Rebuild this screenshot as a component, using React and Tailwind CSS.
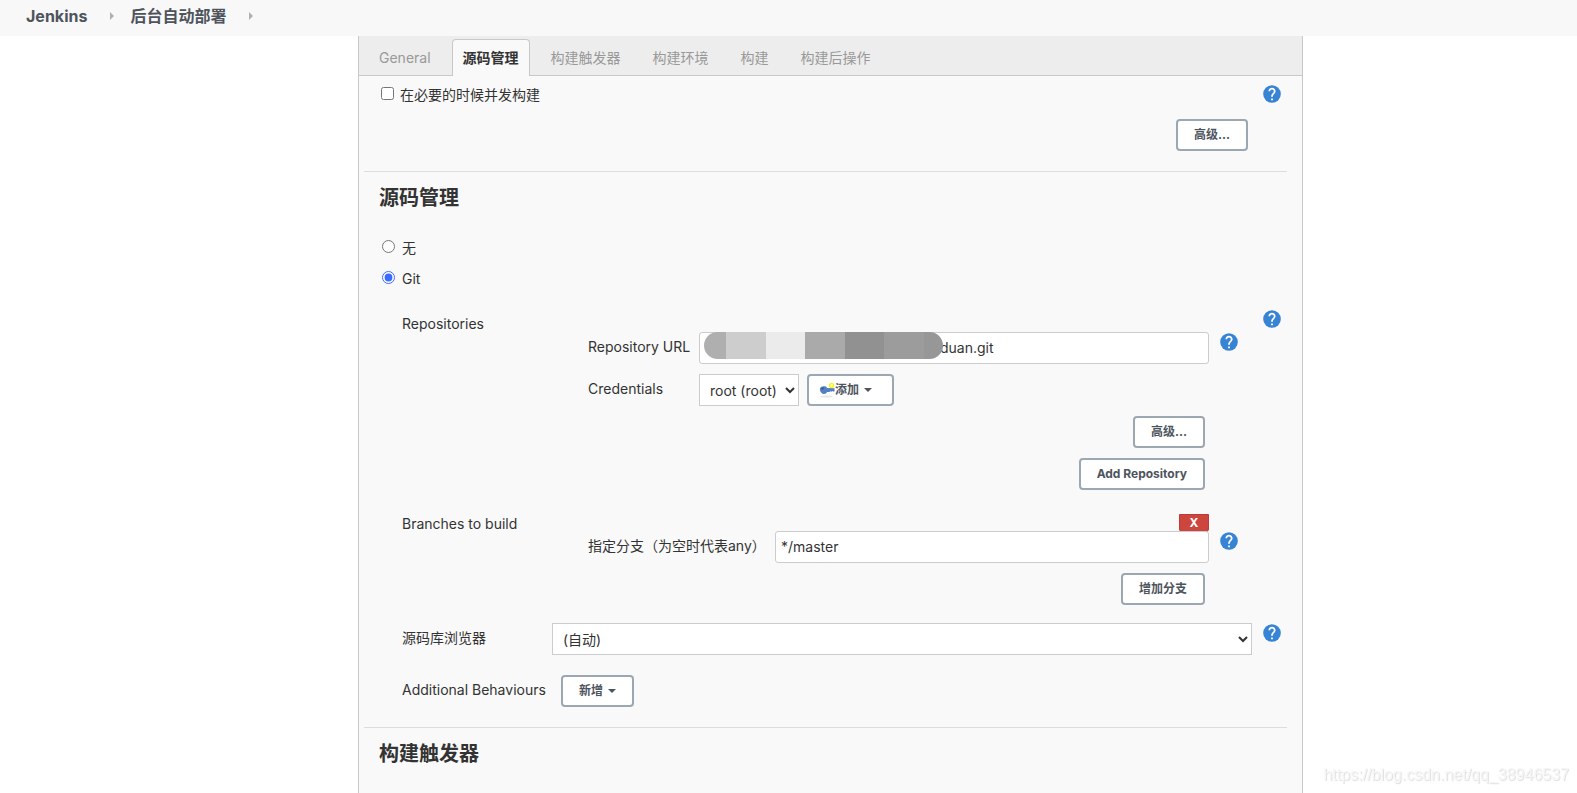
import React, { useState } from 'react';

const tabs = ['General', '源码管理', '构建触发器', '构建环境', '构建', '构建后操作'];

const HelpButton = () => (
  <button type="button" aria-label="帮助" className="block shrink-0">
    <svg className="h-[18px] w-[18px]" viewBox="2 2 20 20">
      <circle cx="12" cy="12" r="9.8" fill="#3784d4" />
      <path
        fill="#fff"
        d="M13 19h-2v-2h2v2zm2.07-7.75l-.9.92C13.45 12.9 13 13.5 13 15h-2v-.5c0-1.1.45-2.1 1.17-2.83l1.24-1.26c.37-.36.59-.86.59-1.41 0-1.1-.9-2-2-2s-2 .9-2 2H8c0-2.21 1.79-4 4-4s4 1.79 4 4c0 .88-.36 1.68-.93 2.25z"
      />
    </svg>
  </button>
);

const Button = ({ children }) => (
  <button
    type="button"
    className="flex h-8 items-center rounded border-2 border-[#9ba7b1] bg-white px-4 text-xs font-bold text-[#4d545d]"
  >
    {children}
  </button>
);

const Caret = () => (
  <svg className="ml-[5px] h-1 w-2" viewBox="0 0 8 4">
    <path d="M0 0h8L4 4z" fill="#4d545d" />
  </svg>
);

const KeyIcon = () => (
  <svg className="-ml-[6px] h-4 w-4" viewBox="0 0 16 16">
    <ellipse cx="7.5" cy="14.5" rx="6" ry="1" fill="#e6e6e6" />
    <circle cx="12.6" cy="3.4" r="2" fill="#fdfbb0" stroke="#f7f21c" strokeWidth="1.4" />
    <path d="M7 6l8.500.2v3l-1 .6-1-.7-1 .7-1-.5-1 .7H7z" fill="#5580c4" />
    <path d="M1 6.500C1.500 4.500 4 3.800 6 4.300c1.800.5 2.800 2 2.600 3.900C8.400 10.600 7 12 5 12c-2.200 0-4.600-2.600-4-5.500z" fill="#5580c4" />
    <path d="M2 7.200c.4-1.600 2-2.200 3.400-1.800L3.800 8z" fill="#3c5f9c" />
  </svg>
);

const Arrow = () => (
  <svg className="h-2 w-1" viewBox="0 0 4 8">
    <path d="M0 0l4 4-4 4z" fill="#b0b0b0" />
  </svg>
);

const SectionTitle = ({ children }) => (
  <h2 className="mt-[11px] pl-5 text-xl leading-[30px] font-bold">{children}</h2>
);

const Divider = () => <hr className="mt-5 mr-[15px] ml-[5px] border-[#ddd]" />;

const App = () => {
  const [activeTab, setActiveTab] = useState('源码管理');
  const [scm, setScm] = useState('git');

  return (
    <div className="flex min-h-screen flex-col bg-white font-[Inter,'Noto_Sans_CJK_SC',sans-serif] text-sm leading-5 text-[#333]">
      <nav className="flex h-9 items-center bg-[#f8f8f8] px-[26px] pb-1 text-base font-bold text-[#4d545d]">
        <a href="#">Jenkins</a>
        <span className="mr-4 ml-[23px]"><Arrow /></span>
        <a href="#">后台自动部署</a>
        <span className="ml-[23px]"><Arrow /></span>
      </nav>

      <main className="mr-[274px] ml-[358px] flex-1 border-x border-[#c8c8c8] bg-[#f9f9f9] pb-6">
        <div className="flex h-10 items-end gap-2.5 border-b border-[#c8c8c8] bg-[#ededed] pl-[9px]">
          {tabs.map((tab) => (
            <button
              key={tab}
              type="button"
              onClick={() => setActiveTab(tab)}
              className={
                tab === activeTab
                  ? '-mb-px h-[37px] rounded-t border border-b-0 border-[#c8c8c8] bg-[#f9f9f9] px-2.5 font-bold'
                  : '-mb-px h-[37px] border border-transparent px-2.5 text-[#999]'
              }
            >
              {tab}
            </button>
          ))}
        </div>

        <form>
          <div className="flex items-start justify-between pt-[9px] pr-[21px] pl-[22px]">
            <label className="flex items-center gap-1.5">
              <input type="checkbox" className="mb-[3px] h-[13px] w-[13px]" />
              在必要的时候并发构建
            </label>
            <HelpButton />
          </div>
          <div className="mt-3.5 flex justify-end pr-[54px]">
            <Button>高级...</Button>
          </div>

          <Divider />
          <SectionTitle>源码管理</SectionTitle>

          <div className="mt-[25px] flex flex-col items-start gap-[11px] pl-[23px]">
            <label className="flex items-center gap-[7px]">
              <input
                type="radio"
                name="scm"
                className="mb-[3px] h-[13px] w-[13px] accent-[#3b6cff]"
                checked={scm === 'none'}
                onChange={() => setScm('none')}
              />
              无
            </label>
            <label className="flex items-center gap-[7px]">
              <input
                type="radio"
                name="scm"
                className="mb-[3px] h-[13px] w-[13px] accent-[#3b6cff]"
                checked={scm === 'git'}
                onChange={() => setScm('git')}
              />
              Git
            </label>
          </div>

          <div className="pr-[21px] pl-[43px]">
            <div className="mt-[21px] flex items-start">
              <div className="w-[186px] pt-1">Repositories</div>
              <div className="mr-[25px] flex flex-1 flex-col gap-2.5 pt-[22px]">
                <div className="flex items-start">
                  <label htmlFor="url" className="w-[111px] pt-[5px]">Repository URL</label>
                  <div className="relative flex-1">
                    <input
                      id="url"
                      defaultValue="duan.git"
                      className="h-8 w-full rounded-[3px] border border-[#ccc] bg-white pb-0.5 pl-[240px]"
                    />
                    <div className="absolute top-0 left-[5px] flex h-[27px] w-[239px] overflow-hidden rounded-full">
                      <span className="w-[22px] bg-[#afafaf]" />
                      <span className="w-10 bg-[#cdcdcd]" />
                      <span className="w-[39px] bg-[#ebebeb]" />
                      <span className="w-10 bg-[#aaa]" />
                      <span className="w-[39px] bg-[#919191]" />
                      <span className="w-10 bg-[#9c9c9c]" />
                      <span className="flex-1 bg-[#979797]" />
                    </div>
                  </div>
                  <div className="ml-[11px] pt-px"><HelpButton /></div>
                </div>
                <div className="flex items-start">
                  <label htmlFor="credentials" className="w-[111px] pt-[5px]">Credentials</label>
                  <select
                    id="credentials"
                    className="mr-2 h-8 w-[100px] border border-[#ccc] bg-white pl-1.5"
                  >
                    <option>root (root)</option>
                  </select>
                  <button
                    type="button"
                    className="flex h-8 items-center rounded border-2 border-[#9ba7b1] bg-white pr-5 pl-4 text-xs font-bold text-[#4d545d]"
                  >
                    <KeyIcon />
                    添加
                    <Caret />
                  </button>
                </div>
                <div className="flex justify-end pr-[33px]">
                  <Button>高级...</Button>
                </div>
                <div className="flex justify-end pr-[33px]">
                  <Button>Add Repository</Button>
                </div>
              </div>
              <HelpButton />
            </div>

            <div className="mt-6 flex items-start">
              <div className="w-[186px]">Branches to build</div>
              <div className="mr-[43px] flex-1">
                <div className="flex justify-end pr-[29px]">
                  <button
                    type="button"
                    className="h-[18px] w-[30px] rounded-b-[3px] border border-[#be3b34] bg-[#cc463e] text-xs leading-4 font-bold text-white"
                  >
                    X
                  </button>
                </div>
                <div className="-mt-px flex items-start">
                  <label htmlFor="branch" className="w-[187px] pt-[5px]">指定分支（为空时代表any）</label>
                  <input
                    id="branch"
                    defaultValue="*/master"
                    className="h-8 min-w-0 flex-1 rounded-[3px] border border-[#ccc] bg-white px-[5px] pb-0.5"
                  />
                  <div className="ml-[11px] pt-px"><HelpButton /></div>
                </div>
                <div className="mt-2.5 flex justify-end pr-[33px]">
                  <Button>增加分支</Button>
                </div>
              </div>
            </div>

            <div className="mt-[18px] flex items-start">
              <label htmlFor="browser" className="w-[150px] pt-[5px]">源码库浏览器</label>
              <select id="browser" className="h-8 flex-1 border border-[#ccc] bg-white pl-1.5">
                <option>(自动)</option>
              </select>
              <div className="ml-[11px] pt-px"><HelpButton /></div>
            </div>

            <div className="mt-5 flex items-start">
              <div className="w-[159px] pt-[5px]">Additional Behaviours</div>
              <Button>
                新增
                <Caret />
              </Button>
            </div>
          </div>

          <Divider />
          <SectionTitle>构建触发器</SectionTitle>
        </form>
      </main>

      <div className="pointer-events-none fixed right-2 bottom-2 font-['Liberation_Sans',Arial,sans-serif] text-base leading-5 text-[#f6f6f6] [text-shadow:1px_1px_1px_#ddd]">
        https://blog.csdn.net/qq_38946537
      </div>
    </div>
  );
};

export default App;
